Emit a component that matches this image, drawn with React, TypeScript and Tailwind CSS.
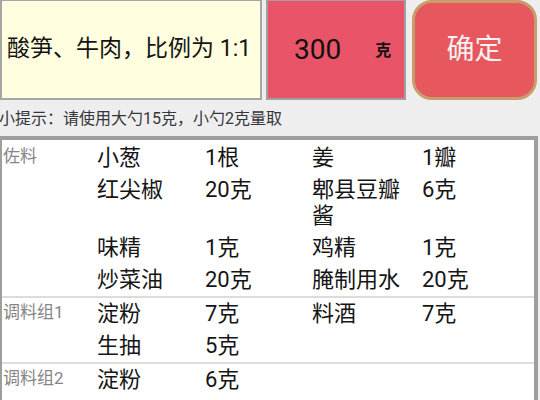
import React from "react";

type Item = [string, string];

const groups: { label: string; rows: (Item | null)[][]; first?: boolean }[] = [
  {
    label: "佐料",
    first: true,
    rows: [
      [["小葱", "1根"], ["姜", "1瓣"]],
      [["红尖椒", "20克"], ["郫县豆瓣酱", "6克"]],
      [["味精", "1克"], ["鸡精", "1克"]],
      [["炒菜油", "20克"], ["腌制用水", "20克"]],
    ],
  },
  {
    label: "调料组1",
    rows: [
      [["淀粉", "7克"], ["料酒", "7克"]],
      [["生抽", "5克"], null],
    ],
  },
  {
    label: "调料组2",
    rows: [[["淀粉", "6克"], null]],
  },
];

const cell = "py-[3px] leading-[26px] text-[22px] text-[#151515]";

const App = () => {
  return (
    <div
      className="w-[540px] h-[400px] overflow-hidden bg-[#eeeeee]"
      style={{ fontFamily: "Roboto, 'Noto Sans CJK SC', sans-serif" }}
    >
      {/* Top bar */}
      <div className="flex items-start h-[101px]">
        <div className="-mt-px w-[262px] h-[101px] border-2 border-[#a6a6a6] bg-[#ffffdf] flex items-center pl-[5px] text-[23px] text-[#141414] whitespace-nowrap">
          酸笋、牛肉，比例为 1:1
        </div>
        <div className="-mt-px ml-[4px] w-[140px] h-[101px] border-2 border-[#a0a0a0] bg-[#ea5468] flex items-center pl-[26px]">
          <span className="text-[28px] text-[#111]">300</span>
          <span className="ml-[34px] text-[16px] font-bold text-[#111] mt-[2px]">克</span>
        </div>
        <button className="ml-[6px] w-[125px] h-[100px] rounded-[20px] border-[3px] border-[#c99c6c] bg-[#e6575e] text-[28px] text-[#f7f0f0] flex items-center justify-center">
          确定
        </button>
      </div>

      {/* Hint */}
      <div className="h-[35px] flex items-center -ml-px text-[16px] text-[#34363c] whitespace-nowrap">
        小提示：请使用大勺15克，小勺2克量取
      </div>

      {/* Ingredient table */}
      <div className="-ml-[2px] w-[540px] h-[270px] border-4 border-[#9e9e9e] bg-white">
        {groups.map((g, gi) => (
          <div
            key={g.label}
            className={`flex ${g.first ? "pt-[2px]" : ""} ${gi < groups.length - 1 ? "border-b-2 border-[#dcdcdc]" : ""}`}
          >
            <div className="w-[95px] shrink-0 pl-[1px] pt-[3px] leading-[22px] text-[17px] text-[#858585]">
              {g.label}
            </div>
            <div className="grid grid-cols-[108px_107px_110px_1fr] flex-1">
              {g.rows.map((r, ri) => (
                <React.Fragment key={ri}>
                  <div className={cell}>{r[0]?.[0]}</div>
                  <div className={cell}>{r[0]?.[1]}</div>
                  <div className={`${cell} pr-[10px]`}>{r[1]?.[0]}</div>
                  <div className={cell}>{r[1]?.[1]}</div>
                </React.Fragment>
              ))}
            </div>
          </div>
        ))}
      </div>
    </div>
  );
};

export default App;
